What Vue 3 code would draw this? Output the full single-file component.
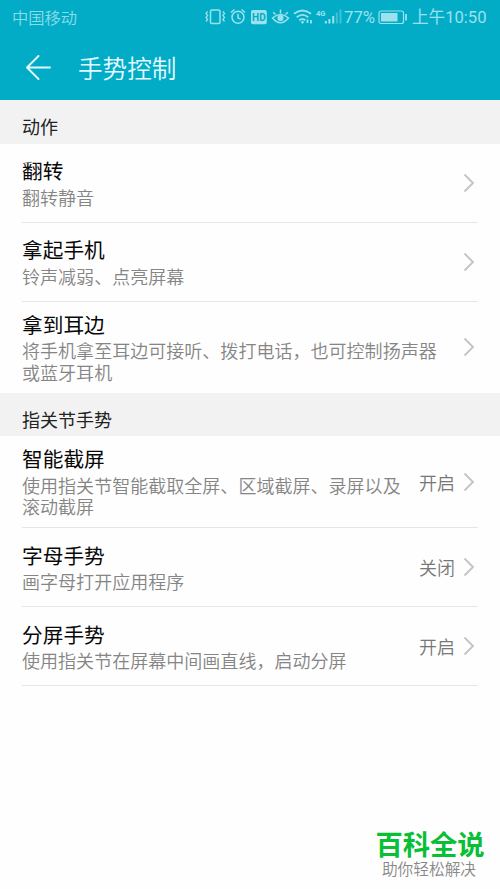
<script setup>
const sections = [
  {
    title: '动作',
    rows: [
      { title: '翻转', lines: ['翻转静音'], height: 79 },
      { title: '拿起手机', lines: ['铃声减弱、点亮屏幕'], height: 79 },
      { title: '拿到耳边', lines: ['将手机拿至耳边可接听、拨打电话，也可控制扬声器', '或蓝牙耳机'], height: 91, last: true },
    ],
  },
  {
    title: '指关节手势',
    rows: [
      { title: '智能截屏', lines: ['使用指关节智能截取全屏、区域截屏、录屏以及', '滚动截屏'], height: 92, state: '开启' },
      { title: '字母手势', lines: ['画字母打开应用程序'], height: 79, state: '关闭' },
      { title: '分屏手势', lines: ['使用指关节在屏幕中间画直线，启动分屏'], height: 79, state: '开启' },
    ],
  },
]
</script>

<template>
  <div class="screen">
    <header class="top">
      <div class="status">
        <span class="carrier">中国移动</span>
        <svg class="icons" width="138" height="24" viewBox="0 0 138 24" fill="none" stroke="currentColor" stroke-width="1.3">
          <rect x="6.5" y="5" width="9.5" height="13.5" rx="1.2" stroke-width="1.5" />
          <path d="M3.6 6.5l-1.600 2 1.600 2-1.600 2 1.600 2-1.600 2M18.900 6.500l1.600 2-1.600 2 1.600 2-1.600 2 1.600 2" />
          <circle cx="34" cy="12.300" r="6" stroke-width="1.500" />
          <path d="M34 8.800v4l2.600 1.300M27 7.500l3.400-3M41 7.500l-3.400-3" stroke-width="1.500" />
          <rect x="47" y="5" width="15.800" height="14.300" rx="2" fill="currentColor" stroke="none" />
          <text x="54.900" y="15.700" text-anchor="middle" class="hd">HD</text>
          <path d="M68.500 13q8-7 16 0q-8 9.400-16 0z" stroke-width="1.500" />
          <circle cx="76.500" cy="13" r="3.100" fill="currentColor" stroke="none" />
          <path d="M76.500 8.500V4.500M71.500 9.500l-2.300-2.300M81.500 9.500l2.300-2.300" stroke-width="1.500" />
          <path d="M90 8.800q8.500-6.600 17 0M92.700 12.200q5.800-4.600 11.600 0M95.300 15.300q3.200-2.400 6 0" stroke-width="1.800" />
          <path d="M98.500 15.700l1.700 1.300-1.700 2-1.700-2z" fill="currentColor" stroke="none" />
          <path d="M103.500 14.500v3.500M107 15v3.500" stroke-width="1.800" />
          <text x="112" y="11" class="net">4G</text>
          <path d="M121.800 18.500v-2.500M125.400 18.500v-4.500M129.200 18.500v-7.500" stroke-width="2" />
          <path d="M132.800 18.500V7.500M136.500 18.500V4.500" stroke-width="2" opacity=".4" />
        </svg>
        <span class="percent">77%</span>
        <svg class="battery" width="30" height="16" viewBox="0 0 30 16" fill="none" stroke="currentColor">
          <rect x="1" y="2" width="24.500" height="12.500" rx="2" stroke-width="1.200" />
          <rect x="3" y="4" width="16.500" height="8.500" fill="currentColor" stroke="none" />
          <path d="M28 5v6.500" stroke-width="1.800" />
        </svg>
        <span class="clock">上午10:50</span>
      </div>
      <div class="bar">
        <svg class="back" width="28" height="28" viewBox="0 0 28 28" fill="none" stroke="currentColor" stroke-width="1.900" stroke-linecap="round" stroke-linejoin="round">
          <path d="M25 13.500H2M13.500 2L2 13.500 13.500 25" />
        </svg>
        <h1>手势控制</h1>
      </div>
    </header>

    <section v-for="s in sections" :key="s.title">
      <h2>{{ s.title }}</h2>
      <div v-for="r in s.rows" :key="r.title" class="row" :class="{ last: r.last }" :style="{ height: r.height + 'px' }">
        <div class="copy">
          <h3>{{ r.title }}</h3>
          <p v-for="l in r.lines" :key="l">{{ l }}</p>
        </div>
        <span v-if="r.state" class="state">{{ r.state }}</span>
        <svg class="chevron" width="12" height="20" viewBox="0 0 12 20" fill="none" stroke="#c4c4c4" stroke-width="1.900">
          <path d="M1.500 1.500L10 10l-8.500 8.500" />
        </svg>
      </div>
    </section>

    <footer class="brand">
      <strong>百科全说</strong>
      <span>助你轻松解决</span>
    </footer>
  </div>
</template>

<style>
body {
  margin: 0;
  background: #fefefe;
}
</style>

<style scoped>
.screen {
  display: flex;
  flex-direction: column;
  box-sizing: border-box;
  width: 500px;
  height: 889px;
  overflow: hidden;
  background: #fefefe;
  font-family: "Noto Sans CJK SC", sans-serif;
}
h1, h2, h3, p {
  margin: 0;
  font-weight: 400;
  white-space: nowrap;
}
.top {
  height: 100px;
  background: #02acc7;
  color: #fff;
}
.status {
  display: flex;
  align-items: center;
  height: 35px;
  padding-left: 12px;
  color: #9be2ed;
  font-size: 16.3px;
  font-weight: 350;
  line-height: 35px;
  white-space: nowrap;
}
.carrier {
  width: 192px;
  margin-top: -1px;
  color: #8bdce9;
}
.icons {
  margin-top: -1px;
}
.hd {
  fill: #02acc7;
  stroke: none;
  font: 700 10px Roboto, sans-serif;
}
.net {
  fill: currentColor;
  stroke: none;
  font: 700 7.5px Roboto, sans-serif;
}
.percent {
  width: 34px;
  margin-left: 2px;
  font-family: Roboto, sans-serif;
  font-size: 16.8px;
  font-weight: 400;
}
.battery {
  margin-top: -1px;
}
.clock {
  margin-left: 4px;
  font-family: Roboto, "Noto Sans CJK SC", sans-serif;
  font-size: 16.6px;
  font-weight: 400;
}
.bar {
  display: flex;
  align-items: center;
  height: 65px;
  padding-left: 25px;
}
.back {
  color: #e4fbff;
}
h1 {
  margin: -2px 0 0 25px;
  color: #e4fbff;
  font-size: 24.6px;
  font-weight: 350;
}
h2 {
  height: 43.5px;
  padding: 5px 0 0 22px;
  box-sizing: border-box;
  background: #f2f2f2;
  color: #222;
  font-size: 18px;
  font-weight: 400;
  line-height: 43px;
}
.row {
  display: flex;
  align-items: center;
  box-sizing: border-box;
  margin: 0 22px;
  padding-right: 3px;
  border-bottom: 1.5px solid #e6e6e6;
}
.last {
  border-bottom: 0;
}
.copy {
  flex: 1;
  min-width: 0;
}
h3 {
  margin-top: -1px;
  padding-bottom: 1px;
  color: #080808;
  font-size: 20.7px;
  font-weight: 400;
  line-height: 29.5px;
}
p {
  color: #858585;
  font-size: 18.05px;
  font-weight: 350;
  line-height: 21.5px;
}
.state {
  margin-right: 8px;
  color: #777;
  font-size: 18px;
  font-weight: 350;
}
.brand {
  display: flex;
  flex-direction: column;
  align-items: center;
  width: 110px;
  margin: auto 15px 10px auto;
  white-space: nowrap;
}
.brand strong {
  color: #08bf35;
  font-size: 27.3px;
  font-weight: 700;
  line-height: 30px;
}
.brand span {
  margin-right: 2px;
  color: #888;
  font-size: 15.7px;
  font-weight: 350;
  line-height: 21px;
}
</style>
